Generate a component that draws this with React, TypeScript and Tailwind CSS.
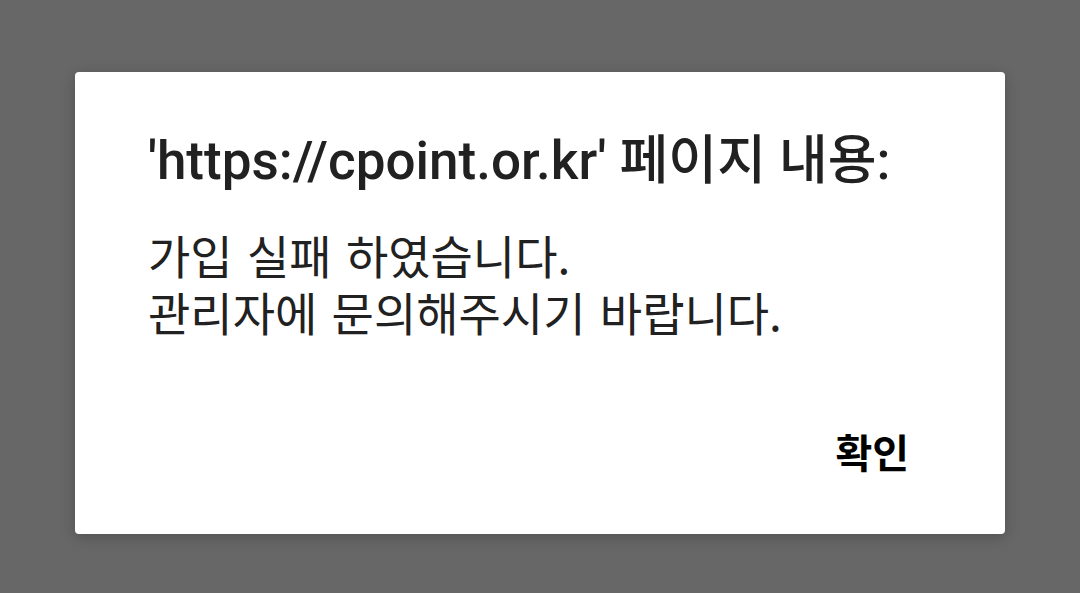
export default function App() {
  return (
    <div className="w-[1080px] h-[593px] bg-[#676767] pt-[72px] pl-[75px]">
      <div className="w-[930px] h-[462px] bg-white rounded-[4px] shadow-[0_3px_14px_rgba(0,0,0,0.22)] flex flex-col pl-[73px] pr-[96px]">
        <h1
          className="mt-[59px] text-[53px] leading-[60px] text-[#212121] font-medium"
          style={{ fontFamily: "Roboto, 'Noto Sans CJK KR', sans-serif" }}
        >
          'https://cpoint.or.kr' 페이지 내용:
        </h1>
        <div
          className="mt-[35px] text-[46px] leading-[57px] text-[#212121] [word-spacing:4px]"
          style={{ fontFamily: "'Noto Sans CJK KR', sans-serif" }}
        >
          <p>가입 실패 하였습니다.</p>
          <p>관리자에 문의해주시기 바랍니다.</p>
        </div>
        <div className="mt-auto mb-[59px] flex justify-end">
          <button
            className="text-[40px] leading-[48px] font-bold text-black"
            style={{ fontFamily: "'Noto Sans CJK KR', sans-serif" }}
          >
            확인
          </button>
        </div>
      </div>
    </div>
  );
}
